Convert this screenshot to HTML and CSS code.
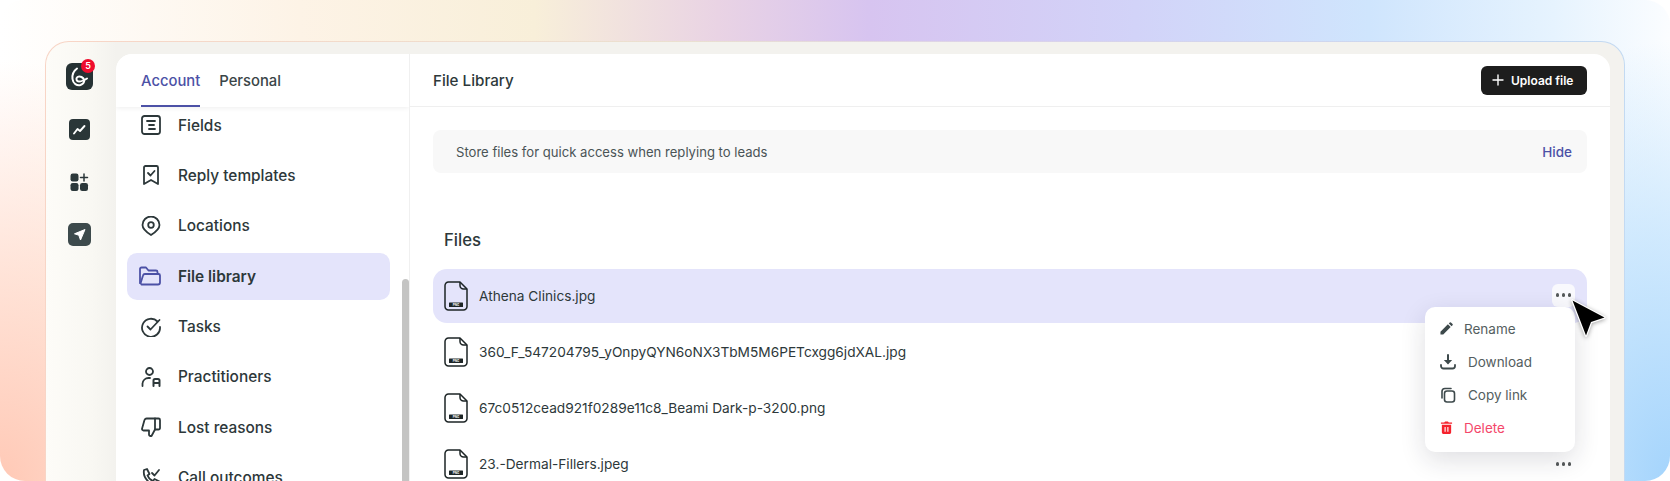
FILE: index.html
```html
<!DOCTYPE html>
<html lang="en">
<head>
<meta charset="utf-8">
<title>File Library</title>
<link rel="stylesheet" href="styles.css">
</head>
<body>
<div class="backdrop">
  <div class="frame">
    <aside class="rail">
      <div class="logo">
        <svg width="27" height="27" viewBox="0 0 27 27"><path d="M11 5.500C7.500 8 6 12 6.500 16 7 20.500 11 23 14.500 22 17 21 18.500 19 18 17 17.500 14.500 14 12.500 11.500 14 9.500 15.500 10.500 18.500 13 18.500 16 18.500 18.500 17 21 15.500" fill="none" stroke="#fff" stroke-width="2" stroke-linecap="round"/></svg>
        <span class="badge">5</span>
      </div>
      <div class="rail-btn rail-chart">
        <svg width="21" height="21" viewBox="0 0 21 21"><path d="M5 14.500l3.500-4.500 2.500 2 4.500-5" fill="none" stroke="#fff" stroke-width="1.900" stroke-linecap="round" stroke-linejoin="round"/></svg>
      </div>
      <div class="rail-grid">
        <svg width="19" height="19" viewBox="0 0 19 19" fill="#2c383a"><rect x="0.500" y="0.500" width="8" height="8" rx="2.200"/><rect x="0.500" y="10" width="8" height="8" rx="2.200"/><rect x="10" y="10" width="8" height="8" rx="2.200"/><path d="M14 1v7M10.500 4.500h7" stroke="#2c383a" stroke-width="1.500" stroke-linecap="round"/></svg>
      </div>
      <div class="rail-btn rail-send">
        <svg width="23" height="23" viewBox="0 0 23 23"><path d="M17 6.500L6.500 10.800l4.300 1.400 1.700 4.800z" fill="#fff" stroke="#fff" stroke-width="1" stroke-linejoin="round"/></svg>
      </div>
    </aside>

    <section class="panel">
      <div class="side">
        <div class="tabs">
          <span class="tab tab-on">Account</span>
          <span class="tab">Personal</span>
        </div>
        <nav class="list">
          <a class="item">
            <svg class="ico" viewBox="0 0 20 20"><rect x="1" y="1" width="18" height="18" rx="2.500"/><path d="M6 6h8M8 10h5M8 14h6"/></svg>
            <span>Fields</span>
          </a>
          <a class="item">
            <svg class="ico" viewBox="0 0 20 20"><path d="M3 2.500A1.500 1.500 0 0 1 4.500 1h11A1.500 1.500 0 0 1 17 2.500V19l-7-4-7 4z"/><path d="M7 8l2.500 2.500L13.500 6"/></svg>
            <span>Reply templates</span>
          </a>
          <a class="item">
            <svg class="ico" viewBox="0 0 20 20"><path d="M10 19c-4-2.500-8.500-5.500-8.500-10a8.500 8.500 0 0 1 17 0c0 4.500-4.500 7.500-8.500 10z"/><circle cx="10" cy="9" r="2.800"/></svg>
            <span>Locations</span>
          </a>
          <a class="item item-on">
            <svg class="ico ico-on" viewBox="0 0 22 20"><path d="M1 17V3a1.500 1.500 0 0 1 1.500-1.500h4.500l2.500 3H17a1.500 1.500 0 0 1 1.500 1.500v1.500"/><path d="M1.500 17.500l2.500-8A2 2 0 0 1 6 8h13.500A1.500 1.500 0 0 1 21 9.500v7a2 2 0 0 1-2 2H2.500"/></svg>
            <span>File library</span>
          </a>
          <a class="item">
            <svg class="ico" viewBox="0 0 20 20"><path d="M16.500 4.500A9 9 0 1 0 19 10"/><path d="M6.500 9.500l3 3L18.500 3"/></svg>
            <span>Tasks</span>
          </a>
          <a class="item">
            <svg class="ico" viewBox="0 0 20 20"><circle cx="8.500" cy="4.500" r="3.500"/><path d="M1.500 19v-2.500A6 6 0 0 1 7.500 11H9"/><path d="M12.500 19v-5.500a1.500 1.500 0 0 1 1.500-1.500h3a1.500 1.500 0 0 1 1.500 1.500V19M12.500 16h6" stroke-width="2"/></svg>
            <span>Practitioners</span>
          </a>
          <a class="item">
            <svg class="ico" viewBox="0 0 20 20"><path d="M14 12.500L10.500 19H9.500a1.500 1.500 0 0 1-1.500-1.500V13.500H2.500A1.500 1.500 0 0 1 1 11.800L3.500 3A2.500 2.500 0 0 1 6 1.500h8z"/><path d="M14 1.500h3.500a1.500 1.500 0 0 1 1.500 1.500v8a1.500 1.500 0 0 1-1.500 1.500H14"/></svg>
            <span>Lost reasons</span>
          </a>
          <a class="item">
            <svg class="ico" viewBox="0 0 20 20"><path d="M3 2l3-1 2.500 5-2 1.500c1 2.500 3 4.500 5.500 5.500l1.500-2 5 2.500-1 3c-8 1-16-6-14.500-14.500z"/><path d="M11 5l2.500 2.500L18 2"/></svg>
            <span>Call outcomes</span>
          </a>
        </nav>
        <div class="scrollbar"></div>
      </div>

      <div class="main">
        <header class="head">
          <h1 class="title">File Library</h1>
          <button class="upload">
            <svg width="12" height="12" viewBox="0 0 12 12"><path d="M6 1v10M1 6h10" stroke="#fff" stroke-width="1.400" stroke-linecap="round"/></svg>
            <span>Upload file</span>
          </button>
        </header>
        <div class="content">
          <div class="notice">
            <span>Store files for quick access when replying to leads</span>
            <a class="hide">Hide</a>
          </div>
          <h2 class="files-title">Files</h2>
          <div class="files">
            <div class="file file-on">
              <svg class="fico" viewBox="0 0 24 30"><path d="M4.500 1H16l7 7v17.500a3.500 3.500 0 0 1-3.500 3.500h-15A3.500 3.500 0 0 1 1 25.500v-21A3.500 3.500 0 0 1 4.500 1z"/><path d="M16 1v3.500A3.500 3.500 0 0 0 19.500 8H23"/><rect class="tag" x="5" y="21.500" width="14" height="4.500" rx="0.500"/><text class="tag-t" x="12" y="25">PNG</text></svg>
              <span class="name">Athena Clinics.jpg</span>
              <span class="dots dots-on"><i></i><i></i><i></i></span>
            </div>
            <div class="file">
              <svg class="fico" viewBox="0 0 24 30"><path d="M4.500 1H16l7 7v17.500a3.500 3.500 0 0 1-3.500 3.500h-15A3.500 3.500 0 0 1 1 25.500v-21A3.500 3.500 0 0 1 4.500 1z"/><path d="M16 1v3.500A3.500 3.500 0 0 0 19.500 8H23"/><rect class="tag" x="5" y="21.500" width="14" height="4.500" rx="0.500"/><text class="tag-t" x="12" y="25">PNG</text></svg>
              <span class="name">360_F_547204795_yOnpyQYN6oNX3TbM5M6PETcxgg6jdXAL.jpg</span>
            </div>
            <div class="file">
              <svg class="fico" viewBox="0 0 24 30"><path d="M4.500 1H16l7 7v17.500a3.500 3.500 0 0 1-3.500 3.500h-15A3.500 3.500 0 0 1 1 25.500v-21A3.500 3.500 0 0 1 4.500 1z"/><path d="M16 1v3.500A3.500 3.500 0 0 0 19.500 8H23"/><rect class="tag" x="5" y="21.500" width="14" height="4.500" rx="0.500"/><text class="tag-t" x="12" y="25">PNG</text></svg>
              <span class="name">67c0512cead921f0289e11c8_Beami Dark-p-3200.png</span>
            </div>
            <div class="file">
              <svg class="fico" viewBox="0 0 24 30"><path d="M4.500 1H16l7 7v17.500a3.500 3.500 0 0 1-3.500 3.500h-15A3.500 3.500 0 0 1 1 25.500v-21A3.500 3.500 0 0 1 4.500 1z"/><path d="M16 1v3.500A3.500 3.500 0 0 0 19.500 8H23"/><rect class="tag" x="5" y="21.500" width="14" height="4.500" rx="0.500"/><text class="tag-t" x="12" y="25">PNG</text></svg>
              <span class="name">23.-Dermal-Fillers.jpeg</span>
              <span class="dots"><i></i><i></i><i></i></span>
            </div>
          </div>
        </div>
        <div class="menu">
          <a class="mi">
            <svg class="mico" viewBox="0 0 14 14"><path d="M0.500 13.500v-3L8.500 2.500l3 3-8 8zM9.500 1.500l1-1a1 1 0 0 1 1.300 0l1.700 1.700a1 1 0 0 1 0 1.300l-1 1z" fill="#3d494b"/></svg>
            <span>Rename</span>
          </a>
          <a class="mi mi-wide">
            <svg class="mico mico-w" viewBox="0 0 16 16"><path d="M8 1v7.500" fill="none" stroke="#3d494b" stroke-width="2" stroke-linecap="round"/><path d="M3.800 6h8.400L8 10.500z" fill="#3d494b"/><path d="M1 11v1a2.500 2.500 0 0 0 2.500 2.500h9A2.500 2.500 0 0 0 15 12v-1" fill="none" stroke="#3d494b" stroke-width="1.800" stroke-linecap="round"/></svg>
            <span>Download</span>
          </a>
          <a class="mi mi-wide">
            <svg class="mico mico-w" viewBox="0 0 16 16"><rect x="4.500" y="4" width="10" height="11" rx="2.500" fill="none" stroke="#3d494b" stroke-width="1.600"/><path d="M2 11V4.500A3 3 0 0 1 5 1.500h6" fill="none" stroke="#3d494b" stroke-width="1.600" stroke-linecap="round"/></svg>
            <span>Copy link</span>
          </a>
          <a class="mi mi-del">
            <svg class="mico" viewBox="0 0 14 14"><path d="M4.500 1.500L5.500 0.500h3l1 1H13v1.500H1V1.500zM2 4h10v8.500A1.500 1.500 0 0 1 10.500 14h-7A1.500 1.500 0 0 1 2 12.500z" fill="#f5222d"/><path d="M5.500 6.500v5M8.500 6.500v5" stroke="#fff" stroke-width="1.200"/></svg>
            <span>Delete</span>
          </a>
        </div>
        <svg class="cursor" width="40" height="46" viewBox="0 0 40 46"><path class="cursor-p" d="M3.500 4.500L35.500 21.500 22 26 17 39.500z"/></svg>
      </div>
    </section>
  </div>
</div>
</body>
</html>
```

FILE: styles.css
```css
* { box-sizing: border-box; }
html, body { margin: 0; height: 100%; background: #fff; overflow: hidden; }
body { font-family: Inter, "Liberation Sans", sans-serif; color: #2d383a; }

.backdrop {
  height: 481px;
  border-radius: 25px;
  padding: 41px 45px 0;
  overflow: hidden;
  background:
    radial-gradient(ellipse 330px 420px at 0% 100%, #ffc9b6 0%, rgba(255,216,200,.7) 50%, rgba(255,240,232,0) 100%),
    radial-gradient(ellipse 260px 440px at 100% 100%, #a4d4fc 0%, rgba(190,225,253,.7) 55%, rgba(220,240,255,0) 100%),
    linear-gradient(90deg, #fff 0%, #fdf3e6 18%, #f8efd9 32%, #e9d3e4 43%, #d7c4f0 52%, #d2d3f8 68%, #cfe5fd 82%, #e6f3fe 93%, #fbfdff 100%);
}

.frame {
  display: flex;
  height: 440px;
  padding: 12px 14px 0 0;
  border: 1px solid transparent;
  border-bottom: 0;
  border-radius: 24px 24px 0 0;
  background:
    linear-gradient(90deg, #fdfcf8 0, #f9f8f3 45px, #f3f2ee 70px) padding-box,
    linear-gradient(90deg, #f8d5c6, #ebe0d0 40%, #dcd2ea 60%, #c3daf2) border-box;
}

.rail {
  width: 70px;
  flex: none;
  display: flex;
  flex-direction: column;
  align-items: center;
  padding: 9px 3px 0 0;
}
.logo {
  position: relative;
  width: 27px;
  height: 27px;
  border-radius: 6px;
  background: #263234;
  margin-bottom: 29px;
}
.logo svg { display: block; }
.badge {
  position: absolute;
  top: -4px;
  right: -2px;
  width: 14px;
  height: 14px;
  border-radius: 50%;
  background: #ef0c2d;
  color: #fff;
  font-size: 9px;
  font-weight: 600;
  line-height: 14px;
  text-align: center;
}
.rail-btn { display: flex; border-radius: 4px; }
.rail-chart { background: #2a3638; margin-bottom: 33px; }
.rail-grid { height: 19px; margin-bottom: 31px; }
.rail-grid svg { display: block; }
.rail-send { background: #3d4a4c; border-radius: 5px; }

.panel {
  flex: 1;
  display: flex;
  min-width: 0;
  background: #fff;
  border-radius: 16px 16px 0 0;
  overflow: hidden;
}

.side {
  position: relative;
  width: 294px;
  flex: none;
  border-right: 1px solid #f0f0f0;
  overflow: hidden;
}
.tabs {
  position: relative;
  z-index: 1;
  display: flex;
  gap: 19px;
  height: 53px;
  padding-left: 25px;
  background: #fff;
  box-shadow: 0 1px 5px rgba(0, 0, 0, .07);
}
.tab {
  height: 53px;
  padding-top: 17px;
  font-size: 14.800px;
  font-weight: 500;
  line-height: 20px;
  color: #3a4547;
}
.tab-on { color: #4c51a6; border-bottom: 2px solid #4c51a6; }

.list {
  display: flex;
  flex-direction: column;
  gap: 3.400px;
  margin-top: -5.500px;
  padding: 0 19px 0 11px;
}
.item {
  display: flex;
  align-items: center;
  gap: 17px;
  height: 47px;
  flex: none;
  padding-left: 14px;
  border-radius: 10px;
  font-size: 15.400px;
  font-weight: 500;
}
.item-on { background: #e4e4fb; padding-left: 12px; gap: 17px; font-weight: 600; }
.ico {
  width: 20px;
  height: 20px;
  flex: none;
  fill: none;
  stroke: #2d383a;
  stroke-width: 1.800;
  stroke-linecap: round;
  stroke-linejoin: round;
}
.ico-on { width: 22px; height: 20px; stroke: #4c51a6; }

.scrollbar {
  position: absolute;
  top: 225px;
  right: 0;
  bottom: 0;
  width: 7px;
  border-radius: 4px 4px 0 0;
  background: #c4c4c3;
}

.main { position: relative; flex: 1; min-width: 0; }
.head {
  display: flex;
  align-items: center;
  justify-content: space-between;
  height: 53px;
  padding: 0 23px;
  border-bottom: 1px solid #efefef;
}
.title { margin: 1px 0 0; font-size: 15.200px; font-weight: 500; color: #2d383a; }
.upload {
  display: flex;
  align-items: center;
  gap: 7px;
  width: 106px;
  height: 29px;
  padding: 0 0 0 11px;
  border: 0;
  border-radius: 6px;
  background: #1d1d1d;
  color: #fff;
  font: 600 12px Inter, "Liberation Sans", sans-serif;
}

.content { padding: 23px 23px 0; }
.notice {
  display: flex;
  align-items: center;
  justify-content: space-between;
  height: 43px;
  padding: 0 15px 0 23px;
  border-radius: 8px;
  background: #f8f8f8;
  font-size: 13.100px;
  color: #4a5456;
}
.hide { font-size: 13.500px; font-weight: 500; color: #4c51a6; }
.files-title {
  margin: 56px 0 18px 11px;
  font-size: 16.700px;
  line-height: 22px;
  font-weight: 500;
  color: #2d383a;
}
.files { display: flex; flex-direction: column; gap: 2px; }
.file {
  display: flex;
  align-items: center;
  gap: 11px;
  height: 54px;
  padding: 0 12px 0 11px;
  border-radius: 14px;
  font-size: 13.700px;
  color: #2d383a;
}
.file-on { background: #e4e4fb; }
.name { flex: 1; }
.fico { width: 24px; height: 30px; flex: none; fill: none; stroke: #1d2526; stroke-width: 1.500; stroke-linejoin: round; }
.tag { fill: #1d2526; stroke: none; }
.tag-t { fill: #fff; stroke: none; font-size: 3px; font-weight: 700; text-anchor: middle; }
.dots {
  display: flex;
  gap: 2.500px;
  align-items: center;
  justify-content: center;
  width: 23px;
  height: 23px;
  border-radius: 6px;
}
.dots i { width: 3.500px; height: 3.500px; border-radius: 50%; background: #55595a; }
.dots-on { background: #f9f9fd; position: relative; top: -1px; }

.menu {
  position: absolute;
  top: 253px;
  right: 35px;
  width: 150px;
  height: 145px;
  padding: 5px 0;
  border-radius: 10px;
  background: #fff;
  box-shadow: 0 8px 26px rgba(30, 30, 50, .14);
}
.mi {
  display: flex;
  align-items: center;
  gap: 11px;
  height: 33px;
  padding-left: 15px;
  font-size: 13.500px;
  color: #545e60;
}
.mi-wide { gap: 12px; }
.mi-del { color: #f4476a; }
.mico { width: 13px; height: 13px; flex: none; }
.mico-w { width: 16px; height: 16px; }
.cursor { position: absolute; top: 242px; right: 1px; filter: drop-shadow(0 1px 2px rgba(0,0,0,.35)); }
.cursor-p { fill: #000; stroke: #fff; stroke-width: 2.500px; stroke-linejoin: round; paint-order: stroke; }
```
